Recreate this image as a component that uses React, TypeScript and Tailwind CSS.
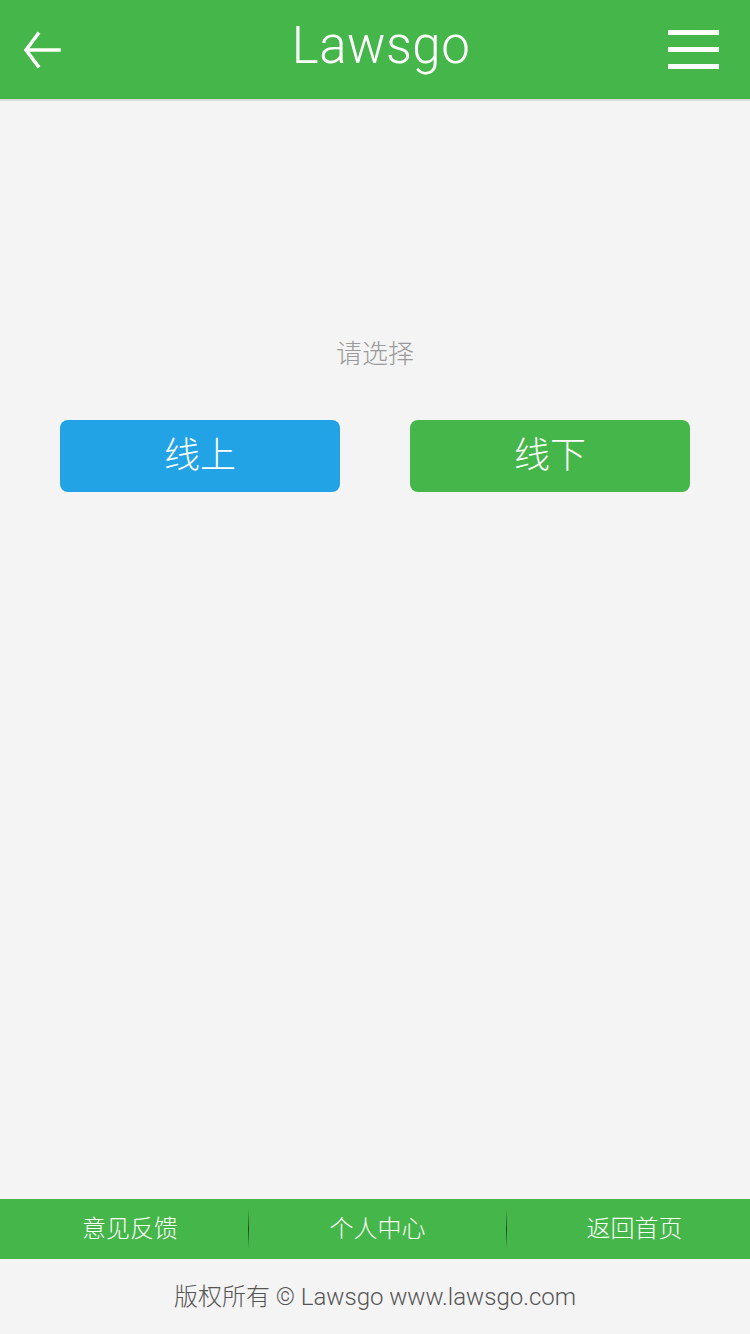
const FONT = "font-['Roboto','Noto_Sans_CJK_SC',sans-serif]";

const App = () => {
    return (
        <div className={`h-[1334px] w-[750px] flex flex-col bg-[#f4f4f4] ${FONT}`}>
            {/* Header */}
            <header className="h-[101px] shrink-0 bg-[#45b649] border-b-2 border-[#dcdcdc] flex items-center justify-between pl-[22px] pr-[31px]">
                <button className="w-[40px] h-[40px] flex items-center justify-center">
                    <svg width="38" height="38" viewBox="0 0 38 38" fill="none" stroke="white" strokeWidth="3.5" strokeLinecap="square">
                        <path d="M36 19H4" />
                        <path d="M15 3L3 19L15 35" />
                    </svg>
                </button>
                <h1 className="text-[51px] font-light tracking-[0.5px] text-white leading-none -mt-2 ml-[32px]">Lawsgo</h1>
                <button className="w-[51px] flex flex-col gap-[12px]">
                    <span className="block h-[5px] bg-white" />
                    <span className="block h-[5px] bg-white" />
                    <span className="block h-[5px] bg-white" />
                </button>
            </header>

            {/* Body */}
            <main className="flex-1 flex flex-col items-center pt-[240px]">
                <p className="text-[26px] text-[#9a9a9a] leading-none font-light">请选择</p>
                <div className="mt-[53px] w-full px-[60px] grid grid-cols-2 gap-[70px]">
                    <button className="h-[72px] rounded-[8px] bg-[#22a3e6] text-white text-[36px] leading-none font-light">线上</button>
                    <button className="h-[72px] rounded-[8px] bg-[#45b649] text-white text-[36px] leading-none font-light">线下</button>
                </div>
            </main>

            {/* Footer nav */}
            <nav className="h-[60px] shrink-0 bg-[#45b649] flex items-center text-white text-[24px] font-light">
                <a className="w-[248px] text-center pl-[12px]">意见反馈</a>
                <span className="w-px h-[40px] bg-gradient-to-b from-[#45b649] via-[#1f4d22] to-[#45b649]" />
                <a className="w-[257px] text-center">个人中心</a>
                <span className="w-px h-[40px] bg-gradient-to-b from-[#45b649] via-[#1f4d22] to-[#45b649]" />
                <a className="flex-1 text-center pl-[12px]">返回首页</a>
            </nav>

            {/* Copyright */}
            <footer className="h-[75px] shrink-0 flex items-center justify-center text-[24px] text-[#555] font-light">
                版权所有 © Lawsgo www.lawsgo.com
            </footer>
        </div>
    );
};

export default App;
